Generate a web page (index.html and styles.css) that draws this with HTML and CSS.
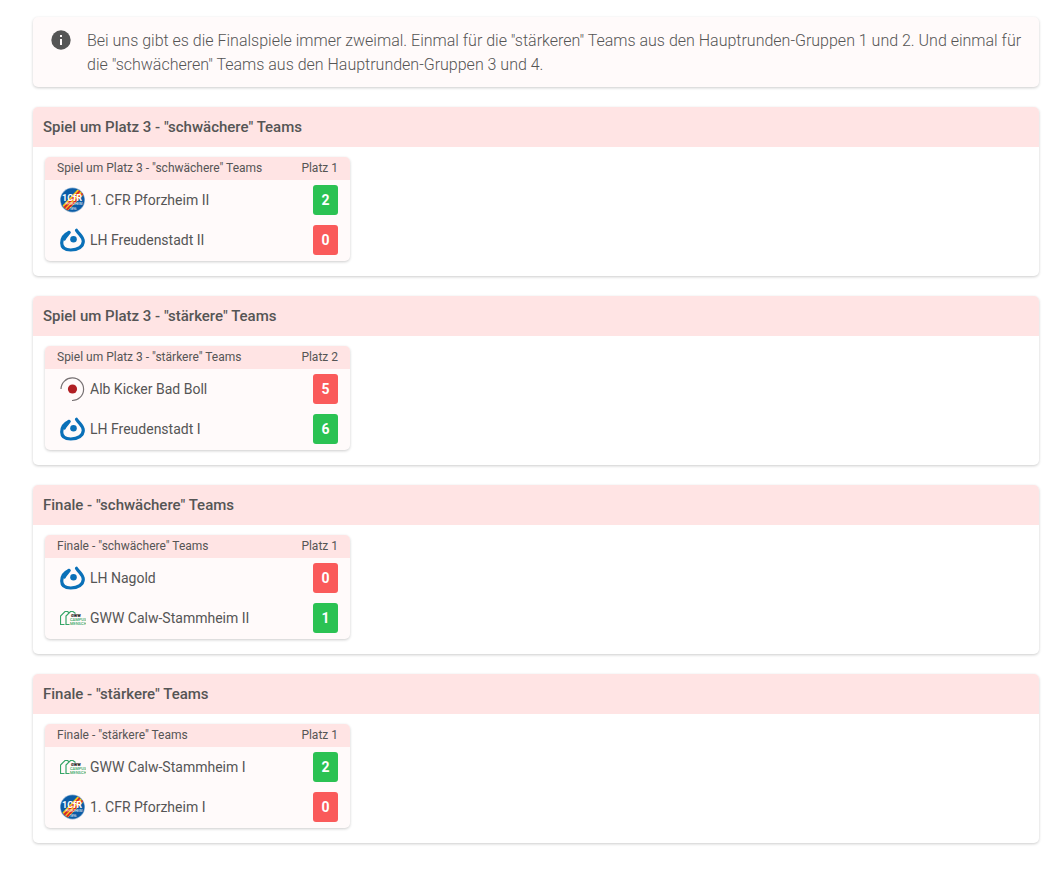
FILE: index.html
```html
<!DOCTYPE html>
<html lang="de">
<head>
  <meta charset="UTF-8">
  <meta name="viewport" content="width=device-width, initial-scale=1.0">
  <link rel="stylesheet" href="styles.css">
  <title>Finalspiele</title>
</head>
<body>
  <svg class="sprite" aria-hidden="true">
    <symbol id="logo-cfr" viewBox="0 0 26 26">
      <circle cx="12.500" cy="13" r="12.5" fill="#8fb3d4"/>
      <circle cx="12.500" cy="13" r="11.800" fill="#0b5ca6"/>
      <path d="M2.500 18.500 17.500 2.500A11.500 11.500 0 0 1 23 8L8 23.500A11.500 11.500 0 0 1 2.500 18.500z" fill="#f6c51c"/>
      <path d="M3.500 20 19 3.500l1.500 1L5 21.500zM6 22.300 22 5.800l1 1.600L7.500 23.200z" fill="#d8232a"/>
      <text x="12" y="14" class="cfr-name">1CfR</text>
      <text x="14" y="18" class="cfr-city">PFORZHEIM</text>
      <text x="13" y="23" class="cfr-city">1896</text>
    </symbol>
    <symbol id="logo-lh" viewBox="0 0 26 26">
      <path d="M9 5.500C4.500 7.500 1.700 11.500 1.700 16c0 4.800 3.600 7 9 7C18 23 23.300 19.500 23.300 14.300c0-4.500-3.300-6-6.800-11" fill="none" stroke="#0a70b8" stroke-width="3.200" stroke-linecap="round"/>
      <path d="M9 5.500C7.500 8 5.500 9.500 4.300 12" fill="none" stroke="#0a70b8" stroke-width="3.200" stroke-linecap="round"/>
      <circle cx="13.500" cy="12.300" r="3.300" fill="#0a70b8"/>
    </symbol>
    <symbol id="logo-alb" viewBox="0 0 26 26">
      <path d="M1 13A11.300 11.300 0 1 1 12 24.500" fill="none" stroke="#777173" stroke-width="1.200"/>
      <circle cx="12.500" cy="13" r="4.600" fill="#b01e23"/>
    </symbol>
    <symbol id="logo-gww" viewBox="0 0 26 26">
      <path d="M4.500 19.500H.5V11L5 6.500h2.500l2 1.500M9.500 19.500H6V11L10.500 6.500H13l2.500 2" fill="none" stroke="#35a567" stroke-width="1.200"/>
      <text x="11" y="12" class="gww-name">GWW</text>
      <text x="10" y="16" class="gww-sub">CAMPUS</text>
      <text x="10" y="20" class="gww-sub">MENSCH</text>
    </symbol>
  </svg>

  <main>
    <div class="card info">
      <svg class="info-icon" viewBox="0 0 20 20" aria-hidden="true">
        <circle cx="10" cy="10" r="9.700" fill="#555"/>
        <path d="M9 5h2v2H9zM9 9h2v6H9z" fill="#fffafa"/>
      </svg>
      <p>Bei uns gibt es die Finalspiele immer zweimal. Einmal für die "stärkeren" Teams aus den Hauptrunden-Gruppen 1 und 2. Und einmal für die "schwächeren" Teams aus den Hauptrunden-Gruppen 3 und 4.</p>
    </div>

    <section class="card">
      <h2>Spiel um Platz 3 - "schwächere" Teams</h2>
      <table class="match">
        <thead>
          <tr><th>Spiel um Platz 3 - "schwächere" Teams</th><th class="place">Platz 1</th></tr>
        </thead>
        <tbody>
          <tr>
            <td><div class="team"><svg class="logo"><use href="#logo-cfr"/></svg>1. CFR Pforzheim II</div></td>
            <td class="result"><span class="score win">2</span></td>
          </tr>
          <tr>
            <td><div class="team"><svg class="logo"><use href="#logo-lh"/></svg>LH Freudenstadt II</div></td>
            <td class="result"><span class="score loss">0</span></td>
          </tr>
        </tbody>
      </table>
    </section>

    <section class="card">
      <h2>Spiel um Platz 3 - "stärkere" Teams</h2>
      <table class="match">
        <thead>
          <tr><th>Spiel um Platz 3 - "stärkere" Teams</th><th class="place">Platz 2</th></tr>
        </thead>
        <tbody>
          <tr>
            <td><div class="team"><svg class="logo"><use href="#logo-alb"/></svg>Alb Kicker Bad Boll</div></td>
            <td class="result"><span class="score loss">5</span></td>
          </tr>
          <tr>
            <td><div class="team"><svg class="logo"><use href="#logo-lh"/></svg>LH Freudenstadt I</div></td>
            <td class="result"><span class="score win">6</span></td>
          </tr>
        </tbody>
      </table>
    </section>

    <section class="card">
      <h2>Finale - "schwächere" Teams</h2>
      <table class="match">
        <thead>
          <tr><th>Finale - "schwächere" Teams</th><th class="place">Platz 1</th></tr>
        </thead>
        <tbody>
          <tr>
            <td><div class="team"><svg class="logo"><use href="#logo-lh"/></svg>LH Nagold</div></td>
            <td class="result"><span class="score loss">0</span></td>
          </tr>
          <tr>
            <td><div class="team"><svg class="logo"><use href="#logo-gww"/></svg>GWW Calw-Stammheim II</div></td>
            <td class="result"><span class="score win">1</span></td>
          </tr>
        </tbody>
      </table>
    </section>

    <section class="card">
      <h2>Finale - "stärkere" Teams</h2>
      <table class="match">
        <thead>
          <tr><th>Finale - "stärkere" Teams</th><th class="place">Platz 1</th></tr>
        </thead>
        <tbody>
          <tr>
            <td><div class="team"><svg class="logo"><use href="#logo-gww"/></svg>GWW Calw-Stammheim I</div></td>
            <td class="result"><span class="score win">2</span></td>
          </tr>
          <tr>
            <td><div class="team"><svg class="logo"><use href="#logo-cfr"/></svg>1. CFR Pforzheim I</div></td>
            <td class="result"><span class="score loss">0</span></td>
          </tr>
        </tbody>
      </table>
    </section>
  </main>
</body>
</html>
```
FILE: styles.css
```css
body {
  margin: 0;
  font-family: Roboto, sans-serif;
  font-size: 14px;
  color: #555;
  background-color: #fff;
}

.sprite {
  display: none;
}

main {
  display: flex;
  flex-direction: column;
  gap: 20px;
  padding: 17px 18px 20px 33px;
}

.card {
  background-color: #fff;
  border-radius: 5px;
  box-shadow: 0 1px 3px rgba(0, 0, 0, 0.2);
  overflow: hidden;
}

.info {
  display: flex;
  align-items: flex-start;
  gap: 16px;
  padding: 12px 12px 10px 18px;
  background-color: #fffafa;
}

.info-icon {
  flex: none;
  width: 20px;
  height: 20px;
  margin-top: 1px;
}

.info p {
  margin: 0;
  font-size: 16px;
  font-weight: 300;
  line-height: 24px;
}

h2 {
  margin: 0;
  padding: 0 10px;
  font-size: 15px;
  font-weight: 500;
  line-height: 40px;
  background-color: #ffe4e4;
}

.match {
  width: 305px;
  margin: 10px 12px 15px;
  padding-bottom: 1px;
  border-spacing: 0;
  border-radius: 5px;
  box-shadow: 0 1px 3px rgba(0, 0, 0, 0.2);
  background-color: #fffafa;
  overflow: hidden;
}

.match th {
  padding: 0 12px;
  font-size: 12px;
  font-weight: 400;
  line-height: 23px;
  text-align: left;
  background-color: #ffe4e4;
}

.match .place {
  text-align: right;
}

.match td {
  height: 40px;
  padding: 0 12px 0 15px;
}

.team {
  display: flex;
  align-items: center;
  gap: 4px;
}

.logo {
  width: 26px;
  height: 26px;
}

.match .result {
  text-align: right;
}

.score {
  display: inline-block;
  width: 25px;
  border-radius: 3px;
  color: #fff;
  font-weight: 700;
  line-height: 30px;
  text-align: center;
  vertical-align: middle;
}

.win {
  background-color: #2bc253;
}

.loss {
  background-color: #fa5a5a;
}

.cfr-name {
  font-size: 9px;
  font-weight: 700;
  fill: #fff;
  text-anchor: middle;
}

.cfr-city {
  font-size: 3px;
  fill: #fff;
  text-anchor: middle;
}

.gww-name {
  font-size: 4px;
  font-weight: 900;
  fill: #222;
}

.gww-sub {
  font-size: 4px;
  font-weight: 500;
  fill: #35a567;
}
```
